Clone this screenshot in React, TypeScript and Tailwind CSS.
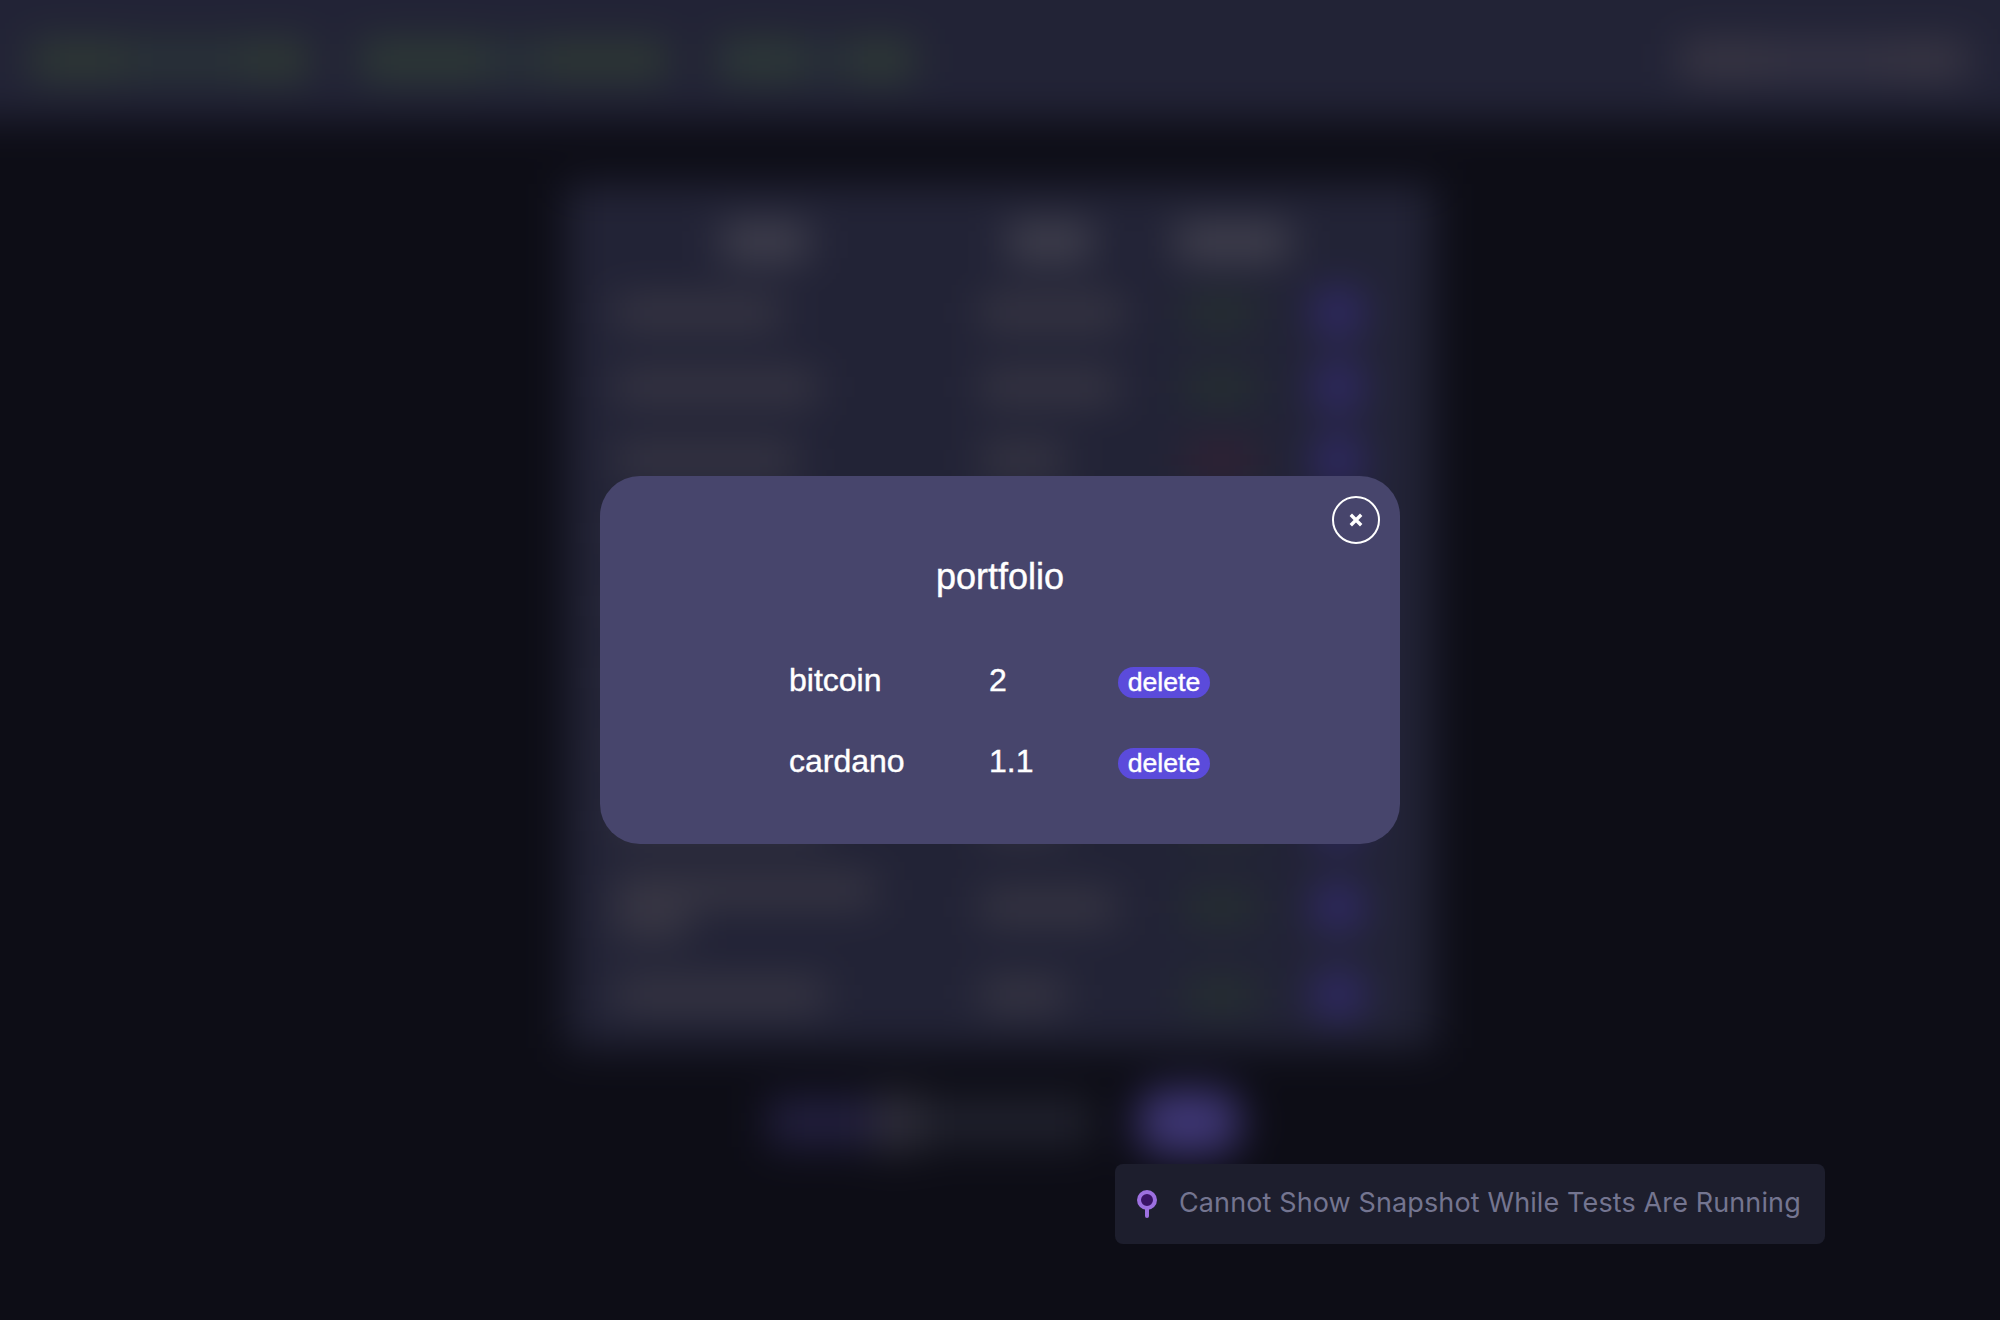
type Coin = {
  height: string;
  name: string[];
  price: string;
  change: string;
};

const coins: Coin[] = [
  { height: 'h-[74px]', name: ['w-[166px]'], price: 'w-[142px]', change: 'bg-[#26322f]' },
  { height: 'h-[74px]', name: ['w-[202px]'], price: 'w-[136px]', change: 'bg-[#26322f]' },
  { height: 'h-[72px]', name: ['w-[182px]'], price: 'w-[84px]', change: 'bg-[#342132]' },
  { height: 'h-[74px]', name: ['w-[180px]'], price: 'w-[84px]', change: 'bg-[#26322f]' },
  { height: 'h-[72px]', name: ['w-[180px]'], price: 'w-[84px]', change: 'bg-[#26322f]' },
  { height: 'h-[72px]', name: ['w-[180px]'], price: 'w-[84px]', change: 'bg-[#26322f]' },
  { height: 'h-[72px]', name: ['w-[180px]'], price: 'w-[84px]', change: 'bg-[#26322f]' },
  { height: 'h-[70px]', name: ['w-[210px]'], price: 'w-[84px]', change: 'bg-[#26322f]' },
  { height: 'h-[102px]', name: ['w-[260px]', 'w-[74px]'], price: 'w-[134px]', change: 'bg-[#26322f]' },
  { height: 'h-[74px]', name: ['w-[210px]'], price: 'w-[84px]', change: 'bg-[#26322f]' },
];

const holdings = [
  { name: 'bitcoin', amount: '2' },
  { name: 'cardano', amount: '1.1' },
];

function CoinRow({ coin }: { coin: Coin }) {
  return (
    <div className={`grid grid-cols-[366px_200px_130px_1fr] items-center ${coin.height}`}>
      <div className="ml-1 flex flex-col gap-1">
        {coin.name.map((w) => (
          <div key={w} className={`h-[30px] bg-[#3a3845] ${w}`} />
        ))}
      </div>
      <div className={`ml-1 h-[30px] bg-[#3a3845] ${coin.price}`} />
      <div className={`ml-2 h-[28px] w-[72px] ${coin.change}`} />
      <div className="ml-[6px] h-[48px] w-[50px] rounded-2xl bg-[#302968]" />
    </div>
  );
}

function Page() {
  return (
    <div className="-m-16 flex h-[1448px] w-[2128px] flex-col items-center bg-[#0d0d16] blur-[20px]">
      <header className="flex h-[184px] w-full shrink-0 items-center justify-between bg-[#222336] pl-[94px] pr-[96px] pt-16">
        <div className="flex items-center">
          <div className="h-9 w-[94px] bg-[#303c35]" />
          <div className="h-9 w-[120px] bg-[#2a3537]" />
          <div className="h-9 w-[66px] bg-[#303c35]" />
          <div className="ml-[50px] h-9 w-[130px] bg-[#2f3d36]" />
          <div className="h-9 w-[50px] bg-[#293238]" />
          <div className="h-9 w-[128px] bg-[#2f3b35]" />
          <div className="ml-[50px] h-9 w-[86px] bg-[#2f3d37]" />
          <div className="h-9 w-[46px] bg-[#283038]" />
          <div className="h-9 w-[64px] bg-[#303d36]" />
        </div>
        <div className="flex items-center">
          <div className="h-9 w-[88px] bg-[#3b3845]" />
          <div className="h-9 w-[120px] bg-[#373545]" />
          <div className="h-9 w-[80px] bg-[#3b3845]" />
        </div>
      </header>

      <main className="mt-[64px] flex h-[864px] w-[868px] shrink-0 flex-col bg-[#222336] px-[45px]">
        <div className="mt-[24px] flex h-[68px] shrink-0 items-center">
          <div className="ml-[111px] h-[36px] w-[86px] bg-[#444350]" />
          <div className="ml-[200px] h-[36px] w-[84px] bg-[#444350]" />
          <div className="ml-[84px] h-[36px] w-[114px] bg-[#444350]" />
        </div>
        {coins.map((coin, i) => (
          <CoinRow key={i} coin={coin} />
        ))}
      </main>

      <div className="mt-[41px] flex h-[66px] shrink-0 items-center">
        <div className="ml-2 flex h-[50px] items-center">
          <div className="h-full w-[106px] bg-[#221f3e]" />
          <div className="h-[60px] w-[46px] bg-[#2e2d39]" />
          <div className="h-full w-[172px] bg-[#1f202c]" />
        </div>
        <div className="ml-[46px] h-[66px] w-[102px] rounded-3xl bg-[#3e3674]" />
      </div>
    </div>
  );
}

function PortfolioModal() {
  return (
    <section className="relative h-[368px] w-[800px] rounded-[40px] bg-[#47456c] pt-[81px] font-['Liberation_Sans',Arial,sans-serif] text-white [-webkit-text-stroke:0.4px_white]">
      <button
        aria-label="close"
        className="absolute right-5 top-5 flex h-12 w-12 items-center justify-center rounded-full border-2 border-white"
      >
        <svg
          width="14"
          height="14"
          viewBox="0 0 14 14"
          fill="none"
          stroke="currentColor"
          strokeWidth="3.4"
          className="-mt-px"
        >
          <path d="M1.8 1.8L12.2 12.2M12.2 1.8L1.8 12.2" />
        </svg>
      </button>
      <h1 className="text-center text-[36px] leading-10">portfolio</h1>
      <div className="ml-[189px] mt-[63px] flex flex-col gap-[41px]">
        {holdings.map((h) => (
          <div key={h.name} className="flex h-10 text-[32px] leading-10">
            <span className="w-[200px]">{h.name}</span>
            <span className="w-[129px]">{h.amount}</span>
            <button className="mt-[7px] flex h-[31px] w-[92px] justify-center rounded-full bg-[#5b4bdb] text-[26.67px] leading-[30px]">
              delete
            </button>
          </div>
        ))}
      </div>
    </section>
  );
}

function Notice() {
  return (
    <div className="absolute left-[1115px] top-[1164px] flex h-20 w-[710px] items-center rounded-lg bg-[#1d1e2d] pl-[22px]">
      <svg width="20" height="28" viewBox="0 0 20 28" fill="none">
        <path d="M10 18V26" stroke="#9d70e0" strokeWidth="4" strokeLinecap="round" />
        <circle cx="10" cy="10" r="8" fill="#3a1466" stroke="#9d70e0" strokeWidth="4" />
      </svg>
      <span className="-mt-[3px] ml-[22px] whitespace-nowrap font-['Inter',sans-serif] text-[27px] leading-10 tracking-[0.12px] text-[#747590]">
        Cannot Show Snapshot While Tests Are Running
      </span>
    </div>
  );
}

export default function App() {
  return (
    <div className="relative h-[1320px] w-[2000px] overflow-hidden bg-[#0d0d16]">
      <Page />
      <div className="absolute inset-0 flex items-center justify-center">
        <PortfolioModal />
      </div>
      <Notice />
    </div>
  );
}
